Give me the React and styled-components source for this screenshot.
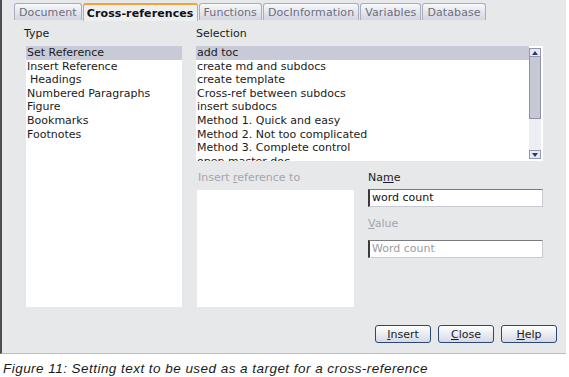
import React from 'react';
import styled, { createGlobalStyle } from 'styled-components';

const GlobalStyle = createGlobalStyle`
  body {
    margin: 0;
    background: #ffffff;
    font-family: "DejaVu Sans", "Liberation Sans", sans-serif;
  }
`;

const Dialog = styled.div`
  width: 566px;
  height: 354px;
  background: #e7e8ea;
  border-left: 2px solid #4e4e52;
  border-bottom: 1px solid #b9bcc6;
  padding-top: 3px;
  box-sizing: border-box;
  display: flex;
  flex-direction: column;
  font-size: 11px;
  color: #1b1b1b;
`;

const TabBar = styled.div`
  display: flex;
  gap: 1px;
  height: 17px;
  padding-left: 12px;
`;

const Tab = styled.div`
  height: 17px;
  box-sizing: border-box;
  padding: 0 ${p => p.pad || 4}px;
  display: flex;
  align-items: center;
  border: 1px solid #a9adbd;
  border-bottom: none;
  border-radius: 3px 3px 0 0;
  font-size: 11px;
  letter-spacing: 0.1px;
  ${p => p.active ? `
    background: #eeeff1;
    border-top: 2px solid #f0a437;
    color: #111;
    font-weight: bold;
    height: 18px;
  ` : `
    background: linear-gradient(#f7f8fa, #d3d5e0);
    color: #6b6e7c;
  `}
`;

const Body = styled.div`
  display: flex;
  gap: 14px;
  padding: 7px 0 0 22px;
`;

const Column = styled.div`
  display: flex;
  flex-direction: column;
  width: ${p => p.w}px;
`;

const Label = styled.div`
  height: 13px;
  line-height: 13px;
  margin-bottom: ${p => p.mb ?? 6}px;
  padding-left: ${p => p.indent || 0}px;
  color: ${p => p.disabled ? '#a3a5ae' : '#1b1b1b'};
  u { text-decoration: underline; }
`;

const ListBox = styled.div`
  background: #ffffff;
  height: ${p => p.h}px;
  margin-left: ${p => p.ml || 0}px;
  display: flex;
  overflow: hidden;
`;

const Items = styled.div`
  flex: 1;
  display: flex;
  flex-direction: column;
`;

const Item = styled.div`
  height: 13.6px;
  line-height: 13.6px;
  padding-left: ${p => p.indent || 1}px;
  white-space: nowrap;
  background: ${p => p.selected ? '#c9cad8' : 'transparent'};
`;

const ScrollBar = styled.div`
  width: 12px;
  margin: 2px 2px 2px 0;
  display: flex;
  flex-direction: column;
  background: #eceef3;
`;

const ScrollButton = styled.div`
  height: 9px;
  box-sizing: border-box;
  border: 1px solid #9498ae;
  background: #e8e9f0;
  display: flex;
  align-items: center;
  justify-content: center;
`;

const Thumb = styled.div`
  height: 62px;
  box-sizing: border-box;
  background: #c6c8d6;
  border: 1px solid #8e92a8;
  border-top: none;
`;

const Track = styled.div`
  flex: 1;
`;

const Lower = styled.div`
  display: flex;
  gap: 14px;
  margin-top: 10px;
`;

const Input = styled.div`
  height: 18px;
  box-sizing: border-box;
  background: #ffffff;
  border: 1px solid #c9cbd3;
  border-left: 2px solid #3a3a3a;
  border-top: 1px solid #7a7a80;
  padding-left: 2px;
  line-height: 16px;
  color: ${p => p.disabled ? '#9a9ca6' : '#111'};
  margin-bottom: ${p => p.mb || 0}px;
`;

const ButtonRow = styled.div`
  display: flex;
  justify-content: flex-end;
  gap: 7px;
  padding-right: 9px;
  margin-top: 18px;
`;

const Button = styled.div`
  width: 56px;
  height: 18px;
  box-sizing: border-box;
  border: 1px solid #2b4773;
  border-radius: 3px;
  background: linear-gradient(#ffffff, #d6d8e4);
  display: flex;
  align-items: center;
  justify-content: center;
  color: #1b1b1b;
  u { text-decoration: underline; }
`;

const Caption = styled.div`
  font-family: "Liberation Sans", Arial, sans-serif;
  font-style: italic;
  font-size: 13.5px;
  letter-spacing: 0.46px;
  color: #1a1a1a;
  padding: 7px 0 0 3px;
`;

const Arrow = ({ up }) => (
  <svg width="8" height="6" viewBox="0 0 8 6">
    <path d={up ? 'M1 5 L4 1 L7 5 Z' : 'M1 1 L4 5 L7 1 Z'} fill="#2a3a66" />
  </svg>
);

const types = ['Set Reference', 'Insert Reference', 'Headings', 'Numbered Paragraphs', 'Figure', 'Bookmarks', 'Footnotes'];
const selections = [
  'add toc',
  'create md and subdocs',
  'create template',
  'Cross-ref between subdocs',
  'insert subdocs',
  'Method 1. Quick and easy',
  'Method 2. Not too complicated',
  'Method 3. Complete control',
  'open master doc',
];

export default function App() {
  return (
    <>
      <GlobalStyle />
      <Dialog>
        <TabBar>
          <Tab pad={4}>Document</Tab>
          <Tab active pad={3}>Cross-references</Tab>
          <Tab pad={4}>Functions</Tab>
          <Tab pad={4}>DocInformation</Tab>
          <Tab pad={4}>Variables</Tab>
          <Tab pad={4}>Database</Tab>
        </TabBar>
        <Body>
          <Column w={158}>
            <Label indent={0}>Type</Label>
            <ListBox h={261} ml={2}>
              <Items>
                {types.map((t, i) => (
                  <Item key={t} selected={i === 0} indent={i === 2 ? 4 : 1}>{t}</Item>
                ))}
              </Items>
            </ListBox>
          </Column>
          <Column w={347}>
            <Label>Selection</Label>
            <ListBox h={115}>
              <Items>
                {selections.map((s, i) => (
                  <Item key={s} selected={i === 0}>{s}</Item>
                ))}
              </Items>
              <ScrollBar>
                <ScrollButton><Arrow up /></ScrollButton>
                <Thumb />
                <Track />
                <ScrollButton><Arrow /></ScrollButton>
              </ScrollBar>
            </ListBox>
            <Lower>
              <Column w={158}>
                <Label disabled indent={2}>Insert <u>r</u>eference to</Label>
                <ListBox h={117} ml={1} />
              </Column>
              <Column w={175}>
                <Label mb={5}>Na<u>m</u>e</Label>
                <Input mb={10}>word count</Input>
                <Label disabled mb={10}><u>V</u>alue</Label>
                <Input disabled>Word count</Input>
              </Column>
            </Lower>
          </Column>
        </Body>
        <ButtonRow>
          <Button><span><u>I</u>nsert</span></Button>
          <Button><span><u>C</u>lose</span></Button>
          <Button><span><u>H</u>elp</span></Button>
        </ButtonRow>
      </Dialog>
      <Caption>Figure 11: Setting text to be used as a target for a cross-reference</Caption>
    </>
  );
}
